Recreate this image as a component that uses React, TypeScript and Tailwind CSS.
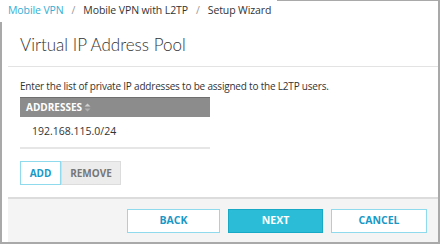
import React from "react";

export default function App() {
  return (
    <div className="w-[440px] h-[244px] bg-white flex flex-col border-r-2 border-b-2 border-[#a9a9a9] overflow-hidden" style={{ fontFamily: '"Open Sans", sans-serif' }}>
      <div className="flex h-[22px] shrink-0">
        <div className="shrink-0 whitespace-nowrap flex items-center pl-[8px] pr-[6px] text-[10.5px] text-[#333] gap-[8px] pb-[1px] tracking-[-0.1px]">
          <span className="text-[#35aed3]">Mobile VPN</span>
          <span className="text-[#999]">/</span>
          <span>Mobile VPN with L2TP</span>
          <span className="text-[#999]">/</span>
          <span>Setup Wizard</span>
        </div>
        <div className="flex-1 border-t border-[#a9a9a9]" />
      </div>
      <div className="flex-1 flex flex-col border-l-2 border-[#a9a9a9] pl-[6px]">
        <div className="h-[45px] border-b border-[#e3e3e3] pl-[12px] pt-[12px] text-[17px] text-[#333] font-light leading-[22px] shrink-0" style={{ fontFamily: 'Lato, sans-serif' }}>
          Virtual IP Address Pool
        </div>
        <div className="pl-[12px] pt-[12px] flex flex-col flex-1">
          <div className="text-[10px] text-[#333] leading-[14px] tracking-[-0.2px] whitespace-nowrap">
            Enter the list of private IP addresses to be assigned to the L2TP users.
          </div>
          <div className="w-[190px] mt-[4px]">
            <div className="h-[20px] bg-[#8c8c8c] border-t border-[#6f6f6f] flex items-center pl-[6px] text-white text-[10px] font-bold gap-[2px]">
              ADDRESSES
              <svg width="7" height="9" viewBox="0 0 7 9"><path d="M3.5 0.5 L6.5 3.5 L0.5 3.5 Z" fill="#d0d0d0" /><path d="M3.5 8.5 L6.5 5.5 L0.5 5.5 Z" fill="#b0b0b0" /></svg>
            </div>
            <div className="h-[32px] border-b-2 border-[#e6e6e6] flex items-center pl-[12px] text-[10.5px] text-[#333]">
              192.168.115.0/24
            </div>
          </div>
          <div className="flex mt-[12px]">
            <button className="w-[41px] h-[24px] border border-[#8fdaec] bg-white text-[#1a98c6] text-[10px] font-bold">ADD</button>
            <button className="w-[60px] h-[24px] border border-[#dcdcdc] bg-[#ececec] text-[#777] text-[10px] font-bold">REMOVE</button>
          </div>
        </div>
        <div className="h-[45px] shrink-0 bg-[#f4f4f4] border-t-2 border-[#dcdcdc] flex items-start justify-end gap-[8px] pt-[10px] pr-[11px]">
          <button className="w-[93px] h-[24px] border border-[#8fdaec] bg-white text-[#1a98c6] text-[10.5px] font-bold">BACK</button>
          <button className="w-[95px] h-[24px] border border-[#17a9c6] bg-[#2bbdd7] text-white text-[10.5px] font-bold">NEXT</button>
          <button className="w-[96px] h-[24px] border border-[#8fdaec] bg-white text-[#1a98c6] text-[10.5px] font-bold">CANCEL</button>
        </div>
      </div>
    </div>
  );
}
